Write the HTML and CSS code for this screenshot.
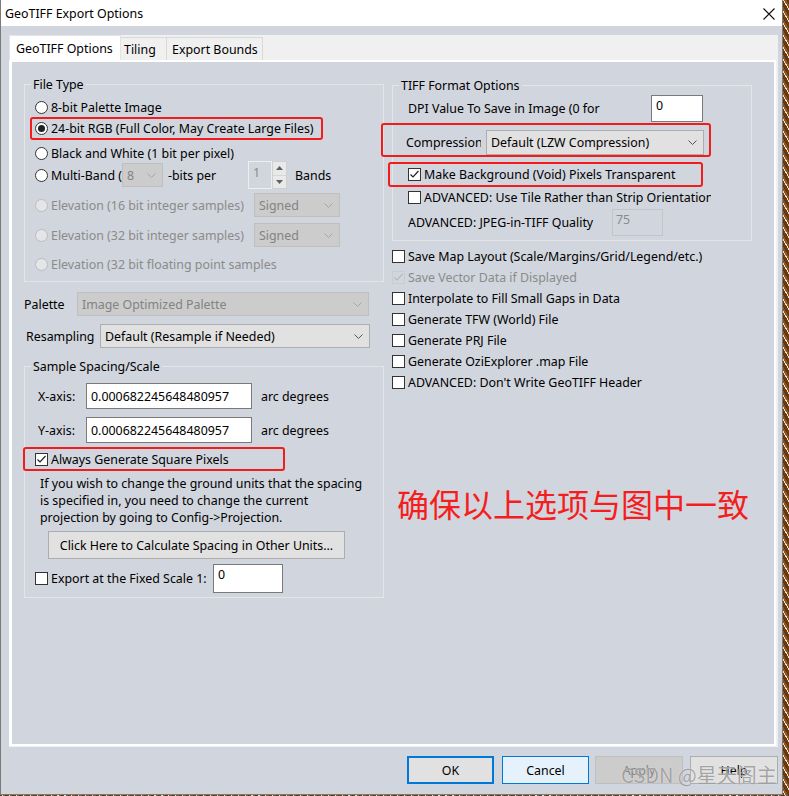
FILE: index.html
```html
<!DOCTYPE html>
<html lang="en">
<head>
<meta charset="utf-8">
<title>GeoTIFF Export Options</title>
<link rel="stylesheet" href="styles.css">
</head>
<body>
<div class="window">
  <div class="titlebar">
    <span class="title">GeoTIFF Export Options</span>
    <svg class="close" width="12" height="12" viewBox="0 0 12 12"><path d="M0.5 0.5L11.5 11.5M11.5 0.5L0.5 11.5" stroke="#111" stroke-width="1.1" fill="none"/></svg>
  </div>
  <div class="client">
    <div class="tabctl">
      <div class="tabs">
        <div class="tab sel">GeoTIFF Options</div>
        <div class="tab tiling">Tiling</div>
        <div class="tab bounds">Export Bounds</div>
      </div>
      <div class="page">
        <div class="cols">
          <div class="col">
            <div class="group ft">
              <div class="gtitle">File Type</div>
              <div class="row r1"><span class="radio"></span><span>8-bit Palette Image</span></div>
              <div class="row r2 hl"><span class="radio on"></span><span>24-bit RGB (Full Color, May Create Large Files)</span></div>
              <div class="row r3"><span class="radio"></span><span>Black and White (1 bit per pixel)</span></div>
              <div class="row r4">
                <span class="radio"></span><span class="clip mb">Multi-Band (</span>
                <div class="select dis w8"><span>8</span><svg class="chev" width="9" height="5" viewBox="0 0 9 5"><path d="M0.5 0.5L4.5 4.5L8.5 0.5" stroke="#a6a6a6" fill="none"/></svg></div>
                <span class="bits">-bits per</span>
                <div class="spin"><div class="spinbox">1</div><div class="spinbtns"><div class="sb"><svg width="7" height="4" viewBox="0 0 7 4"><path d="M0 4L3.5 0L7 4Z" fill="#606060"/></svg></div><div class="sb"><svg width="7" height="4" viewBox="0 0 7 4"><path d="M0 0L3.5 4L7 0Z" fill="#606060"/></svg></div></div></div>
                <span class="bands">Bands</span>
              </div>
              <div class="row r5 dtext">
                <span class="radio dis"></span><span class="clip el">Elevation (16 bit integer samples)</span>
                <div class="select dis wsig"><span>Signed</span><svg class="chev" width="9" height="5" viewBox="0 0 9 5"><path d="M0.5 0.5L4.5 4.5L8.5 0.5" stroke="#a6a6a6" fill="none"/></svg></div>
              </div>
              <div class="row r6 dtext">
                <span class="radio dis"></span><span class="clip el">Elevation (32 bit integer samples)</span>
                <div class="select dis wsig"><span>Signed</span><svg class="chev" width="9" height="5" viewBox="0 0 9 5"><path d="M0.5 0.5L4.5 4.5L8.5 0.5" stroke="#a6a6a6" fill="none"/></svg></div>
              </div>
              <div class="row r7 dtext"><span class="radio dis"></span><span>Elevation (32 bit floating point samples</span></div>
            </div>

            <div class="row palette">
              <span class="lbl lpal">Palette</span>
              <div class="select dis wpal"><span>Image Optimized Palette</span><svg class="chev" width="9" height="5" viewBox="0 0 9 5"><path d="M0.5 0.5L4.5 4.5L8.5 0.5" stroke="#a6a6a6" fill="none"/></svg></div>
            </div>
            <div class="row resamp">
              <span class="lbl lres">Resampling</span>
              <div class="select wres"><span>Default (Resample if Needed)</span><svg class="chev" width="9" height="5" viewBox="0 0 9 5"><path d="M0.5 0.5L4.5 4.5L8.5 0.5" stroke="#555" fill="none"/></svg></div>
            </div>

            <div class="group ss">
              <div class="gtitle">Sample Spacing/Scale</div>
              <div class="row axis ax1"><span class="lbl lax">X-axis:</span><div class="input wax">0.000682245648480957</div><span class="unit">arc degrees</span></div>
              <div class="row axis ax2"><span class="lbl lax">Y-axis:</span><div class="input wax">0.000682245648480957</div><span class="unit">arc degrees</span></div>
              <div class="row sq hl"><span class="check on"><svg width="11" height="11" viewBox="0 0 11 11"><path d="M1.5 5.5L4 8L9.5 2" stroke="#222" stroke-width="1.2" fill="none"/></svg></span><span>Always Generate Square Pixels</span></div>
              <p class="note">If you wish to change the ground units that the spacing<br>is specified in, you need to change the current<br>projection by going to Config-&gt;Projection.</p>
              <div class="btn calc">Click Here to Calculate Spacing in Other Units...</div>
              <div class="row fixed"><span class="check"></span><span class="lfix">Export at the Fixed Scale 1:</span><div class="input wfix">0</div></div>
            </div>
          </div>

          <div class="col">
            <div class="group tiff">
              <div class="gtitle">TIFF Format Options</div>
              <div class="row dpi"><span class="ldpi">DPI Value To Save in Image (0 for</span><div class="input wdpi">0</div></div>
              <div class="row comp hl"><span class="clip lcomp">Compression</span><div class="select wcomp"><span>Default (LZW Compression)</span><svg class="chev" width="9" height="5" viewBox="0 0 9 5"><path d="M0.5 0.5L4.5 4.5L8.5 0.5" stroke="#555" fill="none"/></svg></div></div>
              <div class="row transp hl"><span class="check on"><svg width="11" height="11" viewBox="0 0 11 11"><path d="M1.5 5.5L4 8L9.5 2" stroke="#222" stroke-width="1.2" fill="none"/></svg></span><span>Make Background (Void) Pixels Transparent</span></div>
              <div class="row tile"><span class="check"></span><span>ADVANCED: Use Tile Rather than Strip Orientation</span></div>
              <div class="row jpeg"><span class="ljpeg">ADVANCED: JPEG-in-TIFF Quality</span><div class="input dis wjpeg">75</div></div>
            </div>
            <div class="checks">
              <div class="row ck"><span class="check"></span><span>Save Map Layout (Scale/Margins/Grid/Legend/etc.)</span></div>
              <div class="row ck dtext"><span class="check on dis"><svg width="11" height="11" viewBox="0 0 11 11"><path d="M1.5 5.5L4 8L9.5 2" stroke="#b8b8b8" stroke-width="1.2" fill="none"/></svg></span><span>Save Vector Data if Displayed</span></div>
              <div class="row ck"><span class="check"></span><span>Interpolate to Fill Small Gaps in Data</span></div>
              <div class="row ck"><span class="check"></span><span>Generate TFW (World) File</span></div>
              <div class="row ck"><span class="check"></span><span>Generate PRJ File</span></div>
              <div class="row ck"><span class="check"></span><span>Generate OziExplorer .map File</span></div>
              <div class="row ck"><span class="check"></span><span>ADVANCED: Don't Write GeoTIFF Header</span></div>
            </div>
            <div class="notice">确保以上选项与图中一致</div>
          </div>
        </div>
      </div>
    </div>
    <div class="buttons">
      <div class="btn ok">OK</div>
      <div class="btn cancel">Cancel</div>
      <div class="btn apply">Apply</div>
      <div class="btn help">Help</div>
    </div>
  </div>
  <div class="watermark">CSDN @星天阁主</div>
</div>
</body>
</html>
```

FILE: styles.css
```css
* { box-sizing: border-box; }
html, body { margin: 0; padding: 0; }
body {
  width: 789px;
  height: 796px;
  overflow: hidden;
  background: repeating-linear-gradient(60deg, #6e3c0c 0 2px, #e9e2d6 2px 3px, #8a5426 3px 5px, #5c300a 5px 6px);
  font-family: "Noto Sans", "Noto Sans CJK SC", sans-serif;
  font-size: 12.4px;
  color: #000;
}
.window {
  position: relative;
  width: 783px;
  height: 795px;
  border: 1px solid #7a7a7a;
  border-top: none;
  background: #d1d5dd;
  display: flex;
  flex-direction: column;
}
.titlebar {
  height: 26px;
  background: #fff;
  display: flex;
  align-items: center;
  justify-content: space-between;
  padding: 0 7px 0 4px;
  flex: none;
}
.close { margin-top: 1px; }
.client { padding: 9px 4px 0 8px; }
.tabctl {
  height: 712px;
  background: #f0f0f0;
  display: flex;
  flex-direction: column;
}
.tabs { display: flex; align-items: flex-end; height: 25px; flex: none; }
.tab {
  height: 23px;
  display: flex;
  align-items: center;
  border: 1px solid #d9d9d9;
  border-bottom: none;
  background: #f0f0f0;
  white-space: nowrap;
}
.tab.sel { height: 25px; width: 112px; padding-left: 6px; background: #fff; border-color: #e3e3e3; }
.tab.tiling { width: 46px; padding-left: 3px; border-left: none; }
.tab.bounds { width: 96px; padding-left: 5px; border-left: none; }
.page {
  flex: 1;
  margin: 0 2px 1px 0;
  border-style: solid;
  border-color: #fff;
  border-width: 2px 2px 2px 3px;
  background: #d1d5dd;
}
.cols { display: flex; gap: 8px; padding: 22px 0 0 12px; }
.col { width: 360px; flex: none; }

.group { border: 1px solid #e3e5e9; }
.gtitle {
  width: fit-content;
  margin-top: -9px;
  padding: 0 2px;
  line-height: 17px;
  background: #d1d5dd;
}
.ft .gtitle { margin-left: -4px; }
.ss .gtitle { margin-left: -7px; }
.tiff .gtitle { margin-left: -9px; }
.row { display: flex; align-items: center; white-space: nowrap; }
.hl { border: 2px solid #f21c1c; border-radius: 3px; }
.clip { overflow: hidden; flex: none; }
.dtext { color: #8b8b8b; }

.radio {
  width: 13px; height: 13px; flex: none;
  border: 1px solid #333;
  border-radius: 50%;
  background: #fff;
  margin-right: 3px;
  display: flex; align-items: center; justify-content: center;
}
.radio.on::after { content: ""; width: 7px; height: 7px; border-radius: 50%; background: #222; }
.radio.dis { border-color: #bcbcbc; background: #e4e5e8; }
.check {
  width: 13px; height: 13px; flex: none;
  border: 1px solid #333;
  background: #fff;
  margin-right: 3px;
  display: flex; align-items: center; justify-content: center;
}
.check.dis { border-color: #c9cbd0; background: transparent; }

.select {
  height: 24px; flex: none;
  display: flex; align-items: center; justify-content: space-between;
  border: 1px solid #adadad;
  background: #e1e1e1;
  padding: 0 6px 0 4px;
}
.select.dis { background: #cccccc; border-color: #bfbfbf; color: #838383; }
.input {
  flex: none;
  border: 1px solid #7a7a7a;
  background: #fff;
  padding: 0 4px;
}
.input.dis { background: transparent; border-color: #c2c4c8; color: #8b8b8b; }
.btn {
  display: flex; align-items: center; justify-content: center;
  height: 28px;
  border: 1px solid #adadad;
  background: #e1e1e1;
  white-space: nowrap;
}

/* File Type */
.ft { padding: 0 0 7px 10px; }
.r1 { height: 20px; margin-top: 4px; }
.r2 { height: 23px; width: 293px; margin-left: -5px; padding-left: 3px; }
.r3 { height: 20px; margin-top: 3px; }
.r4 { height: 24px; }
.r5, .r6 { height: 24px; margin-top: 6px; }
.r7 { height: 20px; margin-top: 7px; }
.mb { width: 71px; }
.w8 { width: 41px; }
.bits { width: 85px; padding-left: 5px; flex: none; }
.spin { display: flex; height: 28px; flex: none; }
.spinbox { width: 24px; border: 1px solid #eceef1; color: #8b8b8b; padding: 4px 0 0 4px; line-height: 14px; }
.spinbtns { width: 15px; display: flex; flex-direction: column; border: 1px solid #cfd0d2; background: #e9e9e9; }
.sb { flex: 1; display: flex; align-items: center; justify-content: center; }
.sb + .sb { border-top: 1px solid #d6d6d6; }
.bands { margin-left: 8px; }
.el { width: 193px; margin-right: 10px; }
.wsig { width: 86px; }

.palette { height: 24px; margin-top: 10px; }
.lpal { width: 53px; flex: none; }
.wpal { width: 292px; }
.resamp { height: 24px; margin-top: 8px; padding-left: 2px; }
.lres { width: 74px; flex: none; }
.wres { width: 270px; }

/* Sample spacing */
.ss { margin-top: 18px; padding: 0 0 4px 13px; }
.axis { height: 26px; margin-top: 8px; }
.lax { width: 48px; flex: none; }
.wax { width: 166px; height: 26px; display: flex; align-items: center; }
.unit { margin-left: 9px; }
.sq { height: 24px; width: 262px; margin: 4px 0 0 -15px; padding-left: 10px; }
.note { margin: 4px 0 0 2px; line-height: 17px; white-space: nowrap; }
.calc { width: 297px; margin: 5px 0 0 10px; }
.fixed { height: 29px; margin: 5px 0 0 -3px; }
.lfix { width: 162px; flex: none; }
.wfix { width: 70px; height: 29px; padding-top: 3px; line-height: 14px; }

/* TIFF */
.tiff { margin-top: 1px; padding: 0 0 4px 15px; }
.dpi { height: 27px; margin-top: 1px; }
.ldpi { width: 243px; flex: none; }
.wdpi { width: 52px; height: 27px; padding-top: 3px; line-height: 14px; }
.comp { height: 34px; width: 330px; margin: 1px 0 0 -27px; padding: 5px 0 0 23px; align-items: center; }
.lcomp { width: 75px; margin-right: 5px; }
.wcomp { width: 218px; height: 25px; }
.transp { height: 25px; width: 315px; margin: 5px 0 0 -20px; padding-left: 18px; }
.tile { height: 20px; width: 303px; overflow: hidden; }
.jpeg { height: 27px; margin-top: 2px; }
.ljpeg { width: 204px; flex: none; }
.wjpeg { width: 51px; height: 27px; padding: 3px 0 0 3px; line-height: 14px; }

.checks { margin-top: 5px; }
.ck { height: 21px; }

.notice {
  margin-top: 90px;
  padding-left: 5px;
  font-family: "Noto Sans CJK SC", sans-serif;
  font-size: 32px;
  line-height: 40px;
  color: #f51e1e;
  white-space: nowrap;
}

/* bottom buttons */
.buttons { display: flex; margin-top: 9px; padding-left: 398px; }
.buttons .btn { width: 87px; }
.ok { border: 2px solid #0078d7; margin-right: 8px; }
.cancel { border-color: #0078d7; background: #e5f1fb; margin-right: 6px; }
.buttons .apply { width: 88px; background: #cccccc; border-color: #bfbfbf; color: #838383; margin-right: 7px; }
.buttons .help { width: 88px; }

.watermark {
  position: absolute;
  left: 620px;
  top: 761px;
  font-family: "Noto Sans CJK SC", sans-serif;
  font-size: 20px;
  line-height: 28px;
  color: rgba(135, 135, 135, 0.75);
  text-shadow: 0 0 1px rgba(255, 255, 255, 0.9);
  white-space: nowrap;
}
```
